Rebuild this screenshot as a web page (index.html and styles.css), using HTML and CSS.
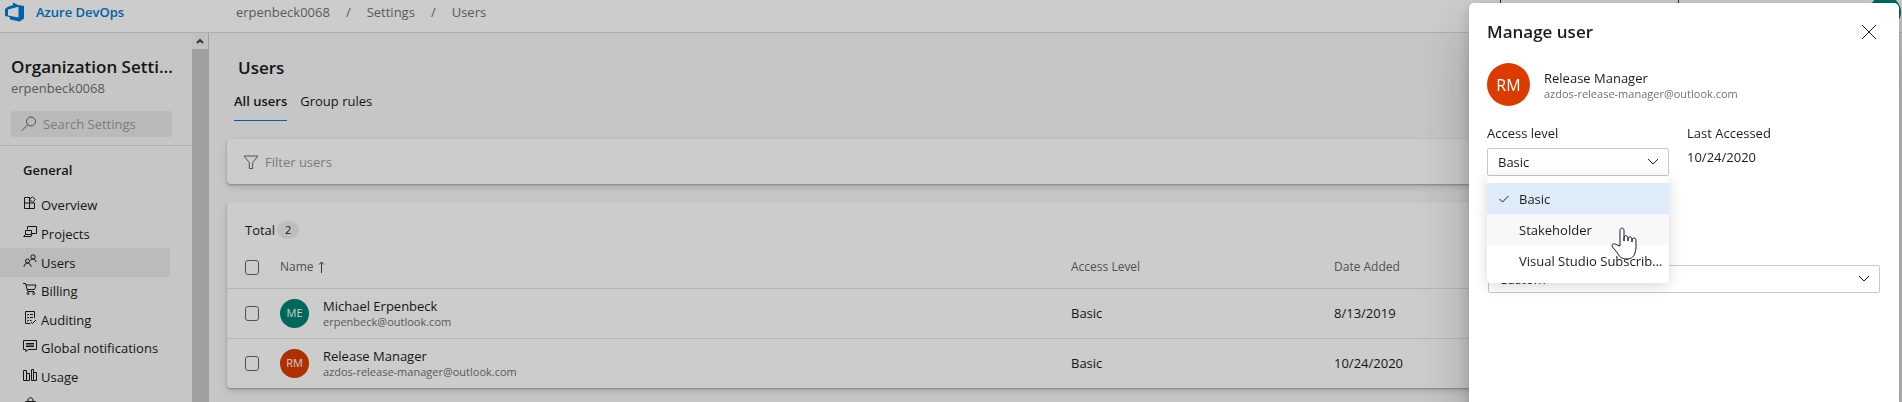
FILE: index.html
```html
<!DOCTYPE html>
<html lang="en">
<head>
<meta charset="utf-8">
<title>Users - Settings</title>
<link rel="stylesheet" href="styles.css">
</head>
<body>
<div class="app">
  <header class="topbar">
    <a class="brand" href="#">
      <svg class="brand-logo" viewBox="0 0 20 20" aria-hidden="true"><path fill-rule="evenodd" d="M0 7 2.500 5 8 3V0.500L13 3 19 4V16.500L14.500 19.500 5.500 17.500V18.500L4.500 15 0 14ZM3 7.500V13.500L13.500 15.500V4.800Z"/></svg>
      Azure DevOps
    </a>
    <nav class="crumbs" aria-label="Breadcrumb">
      <a href="#">erpenbeck0068</a><span>/</span><a href="#">Settings</a><span>/</span><a href="#">Users</a>
    </nav>
    <input class="top-search" type="search" aria-label="Search">
    <button class="me" type="button" aria-label="Account"></button>
  </header>
  <div class="body">
    <aside class="sidebar">
      <div class="side-head">
        <h2>Organization Settings</h2>
        <p>erpenbeck0068</p>
        <label class="side-search">
          <svg viewBox="0 0 16 16" class="line" aria-hidden="true"><circle cx="10" cy="5.500" r="4.500"/><path d="M6.800 8.700.8 14.700"/></svg>
          <input type="text" placeholder="Search Settings" aria-label="Search Settings">
        </label>
      </div>
      <h3>General</h3>
      <nav class="side-nav" aria-label="General">
        <a href="#"><svg viewBox="0 0 14 14" class="line"><path d="M7 1.500H1.500v11h10V7M1.500 7h10M6.500 1.500v11M9.500.7l2.800 2.800-2.800 2.800-2.800-2.800z"/></svg>Overview</a>
        <a href="#"><svg viewBox="0 0 14 14" class="line"><path d="M4.500 4.500v-3h9v7H9M2.500 5.500h6v4h-6zM2.500 9.500.5 11.500h7.500l1-2"/></svg>Projects</a>
        <a href="#" class="current"><svg viewBox="0 0 14 14" class="line"><circle cx="4.500" cy="7" r="2"/><path d="M1 12.800c.2-5 6.800-5 7 0M7.500 6.500c1.500-2.500 5-2 5.500 1.500"/><circle cx="10" cy="3" r="2.200"/></svg>Users</a>
        <a href="#"><svg viewBox="0 0 14 14" class="line"><path d="M0 1.500h2.500l2.200 8h6.500M3 3h10L11.500 7.500H4.200"/><circle cx="5" cy="11.500" r="1"/><circle cx="10.700" cy="11.500" r="1"/></svg>Billing</a>
        <a href="#"><svg viewBox="0 0 14 14" class="line"><path d="M11.500 7V.5h-9v12h5M4 3.500l.8.7L6 3M7 3.500h3M4 6.500l.8.700L6 6M7 6.500h3M4 9.500l.8.700L6 9M7 9.500h1.500M8 11l1.500 1.500L13 9"/></svg>Auditing</a>
        <a href="#"><svg viewBox="0 0 14 14" class="line"><path d="M.5 1.500h13v9H5l-2 2.200v-2.200H.5zM3 4.500h8M3 6h8M3 7.500h8"/></svg>Global notifications</a>
        <a href="#"><svg viewBox="0 0 14 14" class="line"><path d="M.5 2.500h3v10h-3zM3.500 5.500h3v7h-3zM8.500 1.500h2v11h-2zM10.500 4.500h3v8h-3z"/></svg>Usage</a>
        <a href="#"><svg viewBox="0 0 14 14" class="line"><path d="M2.500 4.500h10v8h-10zM5 6V3c0-3 5-3 5 0v3"/></svg>Extensions</a>
      </nav>
    </aside>
    <div class="scroll" aria-hidden="true">
      <svg viewBox="0 0 16 16"><path d="M5 10l3-3 3 3"/></svg>
      <i></i>
    </div>
    <main class="content">
      <h1>Users</h1>
      <div class="tabs" role="tablist">
        <button type="button" role="tab" aria-selected="true">All users</button>
        <button type="button" role="tab" aria-selected="false">Group rules</button>
      </div>
      <label class="card filter">
        <svg viewBox="0 0 16 16" class="line" aria-hidden="true"><path d="M1 2h14L9.700 8.500v6H6.300v-6z"/></svg>
        <input type="text" placeholder="Filter users" aria-label="Filter users">
      </label>
      <section class="card users">
        <div class="total">Total <span>2</span></div>
        <table>
          <colgroup><col class="c-check"><col><col class="c-level"><col class="c-date"><col class="c-last"></colgroup>
          <thead>
            <tr><th><input type="checkbox" aria-label="Select all"></th><th>Name <svg class="sort line" viewBox="0 0 8 12" aria-hidden="true"><path d="M4.500 12V1M2 3.500l2.500-2.500L7 3.500"/></svg></th><th>Access Level</th><th>Date Added</th><th></th></tr>
          </thead>
          <tbody>
            <tr>
              <td><input type="checkbox" aria-label="Select Michael Erpenbeck"></td>
              <td><div class="person"><span class="avatar green">ME</span><div><b>Michael Erpenbeck</b><small>erpenbeck@outlook.com</small></div></div></td>
              <td>Basic</td><td>8/13/2019</td><td></td>
            </tr>
            <tr>
              <td><input type="checkbox" aria-label="Select Release Manager"></td>
              <td><div class="person"><span class="avatar red">RM</span><div><b>Release Manager</b><small>azdos-release-manager@outlook.com</small></div></div></td>
              <td>Basic</td><td>10/24/2020</td><td></td>
            </tr>
          </tbody>
        </table>
      </section>
    </main>
  </div>
</div>
<div class="scrim"></div>
<div class="panel" role="dialog" aria-labelledby="panel-title">
  <div class="panel-head">
    <h2 id="panel-title">Manage user</h2>
    <button type="button" aria-label="Close"><svg viewBox="0 0 16 16" class="line"><path d="M1 1l14 14M15 1 1 15"/></svg></button>
  </div>
  <div class="person large"><span class="avatar red">RM</span><div><b>Release Manager</b><small>azdos-release-manager@outlook.com</small></div></div>
  <div class="fields">
    <div class="access">
      <label for="level">Access level</label>
      <div class="pick">
        <select id="level"><option>Basic</option><option>Stakeholder</option></select>
        <svg viewBox="0 0 12 8" class="line" aria-hidden="true"><path d="M1 1l5 5 5-5"/></svg>
      </div>
      <div class="menu" role="listbox" aria-label="Access level">
        <button type="button" role="option" aria-selected="true"><svg viewBox="0 0 10 8" class="line" aria-hidden="true"><path d="M.5 4l3 3 6-6"/></svg><span>Basic</span></button>
        <button type="button" role="option" aria-selected="false" class="hover"><span>Stakeholder</span></button>
        <button type="button" role="option" aria-selected="false"><span>Visual Studio Subscriber</span></button>
        <svg class="hand" viewBox="0 0 26 33" aria-hidden="true"><path d="M9 19V3.500C9 .3 13 .3 13 3.500V14v-3c0-3 4-3 4 0v3-2c0-2.800 4-2.800 4 0v3-2c0-2.600 4-2.600 4 0v8c0 2-1 3-1 5-1 3-3 6-8 6-6 0-8-3-9.500-6L1.500 20C0 17 2.500 16 5 17.500z"/></svg>
      </div>
    </div>
    <div class="last"><span>Last Accessed</span><span>10/24/2020</span></div>
  </div>
  <div class="pick custom">
    <select aria-label="Permissions"><option>Custom</option></select>
    <svg viewBox="0 0 12 8" class="line" aria-hidden="true"><path d="M1 1l5 5 5-5"/></svg>
  </div>
</div>
</body>
</html>
```
FILE: styles.css
```css
* { box-sizing: border-box; }
body, h1, h2, h3, p { margin: 0; }
body { height: 100vh; overflow: hidden; background: #f8f8f8; color: #1b1b1b; font: 13px/18px "Open Sans", "Noto Sans", sans-serif; }
a { color: inherit; text-decoration: none; }
input, button, select { font: inherit; color: inherit; border: 0; background: none; padding: 0; margin: 0; outline: 0; }
.line { fill: none; stroke: currentColor; stroke-width: 1; }
h1, h2 { font-size: 17px; font-weight: 600; line-height: 24px; }

.app { height: 100vh; display: flex; flex-direction: column; }
.topbar { flex: none; height: 33px; display: flex; align-items: center; padding: 0 1px 9px 5px; background: #fff; border-bottom: 1px solid #dadada; }
.brand { width: 231px; display: flex; align-items: center; gap: 11px; font-weight: 600; color: #0078d4; }
.brand-logo { width: 20px; height: 20px; fill: currentColor; }
.crumbs { flex: 1; display: flex; gap: 16px; color: #717171; }
.top-search { width: 179px; height: 28px; border: 1px solid #333; border-width: 0 1px; }
.me { width: 32px; height: 32px; margin: 0 0 0 190px; border-radius: 50%; background: #008272; }

.body { flex: 1; min-height: 0; display: flex; }
.sidebar { flex: none; width: 192px; overflow: hidden; }
.side-head { padding: 22px 16px 8px 11px; border-bottom: 1px solid #dedede; }
.side-head h2 { overflow: hidden; text-overflow: ellipsis; white-space: nowrap; }
.side-head p { color: #717171; }
.side-search { display: flex; align-items: center; gap: 6px; width: 161px; height: 26px; margin-top: 14px; padding-left: 10px; background: #e9e9e9; border-radius: 2px; color: #666; }
.side-search svg { width: 16px; height: 16px; }
.side-search input { flex: 1; min-width: 0; }
input::placeholder { color: #9c9c9c; opacity: 1; }
.sidebar h3 { padding: 15px 0 0 23px; font-size: 13px; line-height: 18px; font-weight: 600; }
.side-nav { display: grid; grid-auto-rows: 1fr; height: 229px; margin-top: 12px; }
.side-nav a { display: flex; align-items: center; gap: 4px; width: 170px; padding-left: 23px; white-space: nowrap; }
.side-nav svg { width: 14px; height: 14px; flex: none; margin-bottom: 4px; }
.current { background: #eaeaea; }
.scroll { flex: none; width: 17px; display: flex; flex-direction: column; background: #f1f1f1; border-right: 1px solid #c9c9c9; }
.scroll svg { height: 16px; fill: none; stroke: #444; stroke-width: 2; }
.scroll i { flex: 1; background: #c9c9c9; }

.content { flex: 1; min-width: 0; padding: 23px 18px 0; }
.content h1 { padding-left: 11px; }
.tabs { display: flex; align-items: flex-start; gap: 13px; padding: 9px 0 0 7px; }
.tabs button { height: 32px; padding-bottom: 8px; }
.tabs [aria-selected="true"] { border-bottom: 1px solid #0078d4; font-weight: 600; }
.card { background: #fff; border-radius: 4px; box-shadow: 0 3px 7px rgba(0,0,0,.14), 0 1px 2px rgba(0,0,0,.25); }
.filter { display: flex; align-items: center; gap: 6px; height: 45px; margin-top: 18px; padding-left: 16px; color: #666; }
.filter svg { width: 16px; height: 16px; }
.filter input { flex: 1; }
.users { margin-top: 18px; }
.total { display: flex; align-items: center; gap: 2px; height: 51px; padding: 5px 0 0 18px; }
.total span { width: 22px; border-radius: 9px; background: #eee; font-size: 11px; text-align: center; }
table { width: 100%; table-layout: fixed; border-collapse: collapse; }
.c-check { width: 53px; }
.c-level, .c-date { width: 263px; }
.c-last { width: 287px; }
th, td { padding: 0; text-align: left; vertical-align: middle; height: 50px; }
th { height: 35px; padding-bottom: 6px; font-size: 12px; font-weight: 400; color: #666; }
tbody tr { border-top: 1px solid #e4e4e4; }
th:first-child, td:first-child { padding-left: 18px; }
input[type="checkbox"] { display: block; appearance: none; width: 14px; height: 15px; border: 1px solid #666; border-radius: 3px; }
.sort { width: 8px; height: 12px; vertical-align: -2px; color: #444; }
.person { display: flex; align-items: center; gap: 14px; }
.person b, .person small { display: block; font-weight: 400; line-height: 18px; }
.person small { font-size: 11px; line-height: 14px; color: #717171; }
.avatar { flex: none; display: grid; place-items: center; width: 29px; height: 29px; border-radius: 50%; color: #fff; font-size: 11px; }
.green { background: #008272; }
.red { background: #da3b01; }

.scrim { position: fixed; inset: 0; background: rgba(0,0,0,.2); }
.panel { position: fixed; top: 3px; right: 3px; bottom: -20px; width: 430px; padding: 16px 19px 0 18px; background: #fff; border-radius: 5px; box-shadow: 0 26px 58px rgba(0,0,0,.22), 0 5px 14px rgba(0,0,0,.18); }
.panel-head { display: flex; justify-content: space-between; align-items: center; height: 26px; padding-right: 3px; }
.panel-head button { height: 16px; }
.panel-head svg { display: block; width: 16px; height: 16px; }
.large { margin-top: 18px; }
.large .avatar { width: 43px; height: 43px; font-size: 16px; }
.fields { display: flex; gap: 18px; margin-top: 18px; }
.access { position: relative; width: 182px; }
.access label { display: block; margin-bottom: 6px; }
.last { display: flex; flex-direction: column; gap: 6px; }
.pick { display: grid; align-items: center; height: 28px; }
.pick select { grid-area: 1 / 1; width: 100%; height: 100%; padding: 0 10px; appearance: none; border: 1px solid #c8c8c8; border-radius: 2px; }
.pick svg { grid-area: 1 / 1; justify-self: end; width: 12px; height: 8px; margin-right: 10px; pointer-events: none; }
.menu { position: absolute; z-index: 1; top: 100%; left: 0; right: 0; padding: 7px 0; background: #fff; border-radius: 3px; box-shadow: 0 3px 14px rgba(0,0,0,.16); }
.menu button { display: grid; grid-template-columns: 10px 1fr; align-items: center; gap: 10px; width: 100%; height: 31px; padding: 0 6px 0 12px; text-align: left; }
.menu button svg { width: 10px; height: 8px; }
.menu button span { grid-column: 2; overflow: hidden; text-overflow: ellipsis; white-space: nowrap; }
.menu [aria-selected="true"] { background: #deecf9; }
.menu .hover { background: #f8f8f8; }
.hand { position: absolute; left: 124px; top: 51px; width: 26px; height: 33px; fill: #fff; stroke: #1b1b2f; stroke-width: 1; pointer-events: none; }
.custom { margin: 89px 0 0 1px; }
```
